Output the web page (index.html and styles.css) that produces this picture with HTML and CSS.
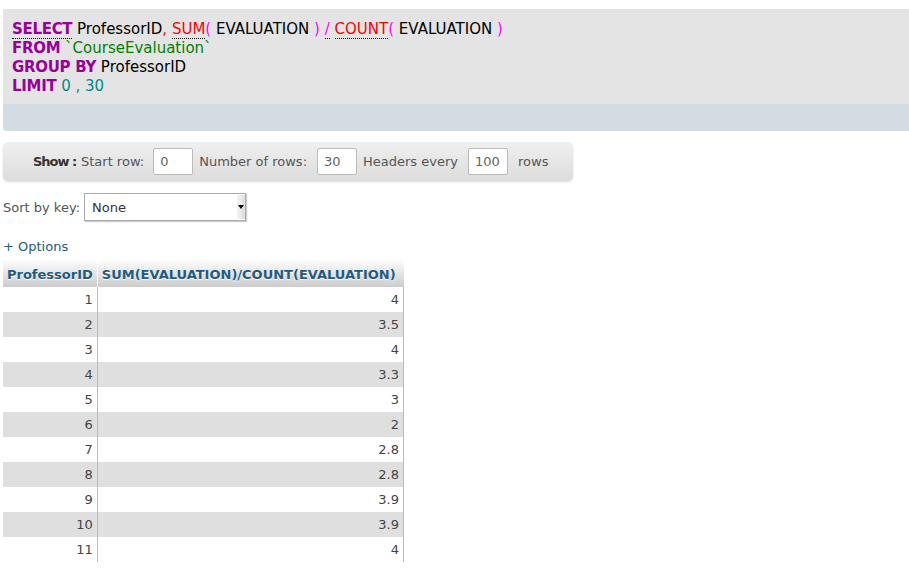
FILE: index.html
```html
<!DOCTYPE html>
<html>
<head>
<meta charset="utf-8">
<link rel="stylesheet" href="styles.css">
</head>
<body>
<div class="sqlbox">
  <div class="sql">
    <div><span class="kw u">SELECT</span> ProfessorID<span class="pun">,</span> <span class="fn u">SUM</span><span class="par">(</span> EVALUATION <span class="par">)</span> <span class="par u">/</span> <span class="fn u">COUNT</span><span class="par">(</span> EVALUATION <span class="par">)</span></div>
    <div><span class="kw">FROM</span> <span class="tbl">`CourseEvaluation`</span></div>
    <div><span class="kw">GROUP BY</span> ProfessorID</div>
    <div><span class="kw">LIMIT</span> <span class="num">0 , 30</span></div>
  </div>
  <div class="sqlfoot"></div>
</div>

<div class="showbar">
  <b class="show">Show :</b>
  <span>Start row:</span>
  <span class="inp first">0</span>
  <span>Number of rows:</span>
  <span class="inp">30</span>
  <span>Headers every</span>
  <span class="inp">100</span>
  <span class="rows">rows</span>
</div>

<div class="sortrow">
  <span>Sort by key:</span>
  <div class="select"><span>None</span><span class="arrow"></span></div>
</div>

<div class="options">+ Options</div>

<table class="data">
  <thead>
    <tr><th class="c1">ProfessorID</th><th class="c2">SUM(EVALUATION)/COUNT(EVALUATION)</th></tr>
  </thead>
  <tbody>
    <tr><td>1</td><td>4</td></tr>
    <tr class="odd"><td>2</td><td>3.5</td></tr>
    <tr><td>3</td><td>4</td></tr>
    <tr class="odd"><td>4</td><td>3.3</td></tr>
    <tr><td>5</td><td>3</td></tr>
    <tr class="odd"><td>6</td><td>2</td></tr>
    <tr><td>7</td><td>2.8</td></tr>
    <tr class="odd"><td>8</td><td>2.8</td></tr>
    <tr><td>9</td><td>3.9</td></tr>
    <tr class="odd"><td>10</td><td>3.9</td></tr>
    <tr><td>11</td><td>4</td></tr>
  </tbody>
</table>
</body>
</html>
```

FILE: styles.css
```css
html, body {
  margin: 0;
  padding: 0;
  background: #fff;
}
body {
  font-family: "DejaVu Sans", sans-serif;
  font-size: 13px;
  color: #444;
  padding: 9px 0 0 3px;
  overflow: hidden;
}
.sqlbox {
  background: #e4e4e4;
  border-bottom-left-radius: 4px;
  overflow: hidden;
  margin-right: -20px;
}
.sql {
  padding: 11px 9px 8px;
  font-size: 15px;
  line-height: 19px;
  color: #000;
}
.kw { color: #990099; font-weight: bold; letter-spacing: -0.3px; }
.fn { color: #ff0000; }
.par { color: #ff00ff; }
.pun { color: #ff0000; }
.tbl { color: #008000; }
.num { color: #008b8b; }
.u { border-bottom: 1px dotted #000; }
.sqlfoot {
  height: 27px;
  background: #d3dce3;
}
.showbar {
  margin-top: 11px;
  width: 570px;
  height: 39px;
  box-sizing: border-box;
  border-radius: 5px;
  background: linear-gradient(#f0f0f0, #dcdcdc);
  box-shadow: 0 1px 2px rgba(0,0,0,0.15);
  display: flex;
  align-items: center;
  padding-left: 30px;
  color: #555;
}
.show { color: #333; letter-spacing: -1px; margin-right: 4.7px; }
.inp {
  display: inline-block;
  width: 40px;
  height: 27px;
  box-sizing: border-box;
  background: #fff;
  border: 1px solid #bbb;
  border-radius: 2px;
  padding-left: 6px;
  line-height: 25px;
  margin: 0 6px 0 10px;
  color: #666;
}
.inp.first { margin-left: 9px; }
.rows { margin-left: 4px; }
.sortrow {
  display: flex;
  align-items: center;
  margin-top: 12px;
  margin-left: 0;
  color: #555;
}
.select {
  margin-left: 4px;
  width: 162px;
  height: 28px;
  box-sizing: border-box;
  border: 1px solid #aaa;
  background: #fff;
  box-shadow: 1px 1px 1px rgba(0,0,0,0.2);
  display: flex;
  align-items: center;
  justify-content: space-between;
  padding-left: 7px;
  color: #333;
}
.arrow {
  width: 8px;
  height: 24px;
  background: linear-gradient(90deg, #f4f4f4, #ddd);
  position: relative;
}
.arrow::after {
  content: "";
  position: absolute;
  left: 1px;
  top: 10px;
  border-left: 3px solid transparent;
  border-right: 3px solid transparent;
  border-top: 4px solid #000;
}
.options {
  margin-top: 17px;
  color: #235a81;
  line-height: 18px;
}
.data {
  border-collapse: collapse;
  margin-top: 3px;
  width: 401px;
}
.data th {
  background: linear-gradient(#fff, #ccc);
  color: #235a81;
  font-weight: bold;
  text-shadow: 0 1px 0 #fff;
  height: 28px;
  padding: 3px 4px 0;
  box-sizing: border-box;
  text-align: left;
  white-space: nowrap;
}
.data th.c1 { border-right: 1px solid #fff; width: 86px; }
.data td {
  height: 25px;
  padding: 0 4px;
  text-align: right;
  line-height: 25px;
}
.data td:first-child { border-right: 1px solid #bbb; }
.data td:last-child { border-right: 1px solid #bbb; }
.data tr.odd td { background: #dfdfdf; }
```
